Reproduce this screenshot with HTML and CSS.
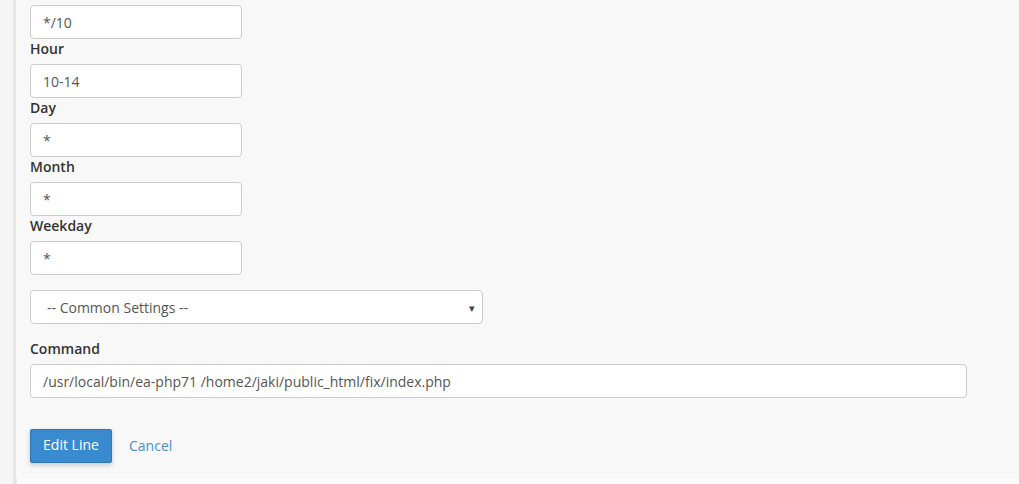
FILE: index.html
```html
<!DOCTYPE html>
<html>
<head>
<meta charset="utf-8">
<link rel="stylesheet" href="styles.css">
</head>
<body>
<div class="page">
  <div class="panel">
    <form class="cron-form">
      <div class="field"><input class="text-input" type="text" value="*/10"></div>
      <div class="field">
        <label class="field-label">Hour</label>
        <input class="text-input" type="text" value="10-14">
      </div>
      <div class="field">
        <label class="field-label">Day</label>
        <input class="text-input" type="text" value="*">
      </div>
      <div class="field">
        <label class="field-label">Month</label>
        <input class="text-input" type="text" value="*">
      </div>
      <div class="field">
        <label class="field-label">Weekday</label>
        <input class="text-input" type="text" value="*">
      </div>
      <div class="select-wrap">
        <div class="select-box">
          <span class="select-text">-- Common Settings --</span>
          <span class="select-caret">▾</span>
        </div>
      </div>
      <div class="command-field">
        <label class="field-label command-label">Command</label>
        <input class="text-input command-input" type="text" value="/usr/local/bin/ea-php71 /home2/jaki/public_html/fix/index.php">
      </div>
      <div class="actions">
        <button type="button" class="btn-primary">Edit Line</button>
        <a class="cancel-link" href="#">Cancel</a>
      </div>
    </form>
  </div>
</div>
</body>
</html>
```
FILE: styles.css
```css
html, body {
  margin: 0;
  padding: 0;
}
body {
  background: #f5f5f5;
  font-family: "Open Sans", "Liberation Sans", sans-serif;
  font-size: 14px;
  color: #333;
  width: 1019px;
  height: 484px;
  overflow: hidden;
}
.page {
  padding-left: 13px;
  height: 484px;
  box-sizing: border-box;
}
.panel {
  background: #fbfbfb;
  border-left: 3px solid #e6e6e6;
  box-shadow: inset 1px 0 0 #ebebeb;
  height: 484px;
  box-sizing: border-box;
}
.cron-form {
  display: flex;
  flex-direction: column;
  background: #f8f8f8;
  height: 478px;
  box-sizing: border-box;
  padding-left: 14px;
  padding-top: 5px;
}
.field {
  display: flex;
  flex-direction: column;
}
.field-label {
  display: block;
  font-weight: 600;
  line-height: 20px;
  margin-bottom: 5px;
  color: #333;
}
.text-input {
  width: 212px;
  height: 34px;
  box-sizing: border-box;
  border: 1px solid #cccccc;
  border-radius: 4px;
  background: #fff;
  padding: 0 12px;
  font-family: "Open Sans", "Liberation Sans", sans-serif;
  font-size: 14px;
  color: #555;
  outline: none;
}
.select-wrap {
  margin-top: 15px;
}
.select-box {
  width: 453px;
  height: 34px;
  box-sizing: border-box;
  border: 1px solid #cccccc;
  border-radius: 4px;
  background: #fff;
  display: flex;
  align-items: center;
  justify-content: space-between;
  padding: 0 7px 0 16px;
  color: #555;
}
.select-caret {
  font-size: 11px;
  color: #444;
}
.command-field {
  margin-top: 15px;
  display: flex;
  flex-direction: column;
}
.command-label {
  margin-bottom: 5px;
}
.command-input {
  width: 937px;
}
.actions {
  margin-top: 31px;
  display: flex;
  align-items: center;
  gap: 17px;
}
.btn-primary {
  width: 82px;
  height: 34px;
  background: #3a8ad0;
  color: #fff;
  border: 1px solid #2f78b8;
  border-radius: 2px;
  font-family: "Open Sans", "Liberation Sans", sans-serif;
  font-size: 14px;
  line-height: 30px;
  padding: 0 0 2px;
  box-shadow: 0 2px 5px rgba(0,0,0,0.2);
}
.cancel-link {
  color: #4b8dc8;
  text-decoration: none;
  margin-top: -2px;
}
```
